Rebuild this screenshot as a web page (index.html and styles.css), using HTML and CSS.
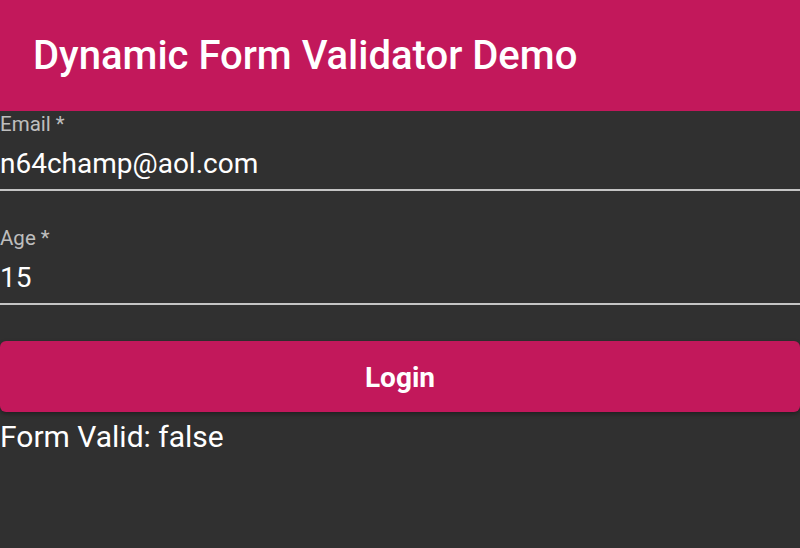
FILE: index.html
```html
<!DOCTYPE html>
<html>
<head>
<meta charset="utf-8">
<link rel="stylesheet" href="styles.css">
</head>
<body>
<header class="app-bar">
  <h1 class="title">Dynamic Form Validator Demo</h1>
</header>
<main class="content">
  <form class="form">
    <div class="field">
      <label class="label">Email *</label>
      <div class="value">n64champ@aol.com</div>
    </div>
    <div class="field">
      <label class="label">Age *</label>
      <div class="value">15</div>
    </div>
    <button type="button" class="btn">Login</button>
  </form>
  <p class="status">Form Valid: false</p>
</main>
</body>
</html>
```
FILE: styles.css
```css
html, body {
  margin: 0;
  padding: 0;
  background: #303030;
  font-family: Roboto, "Noto Sans", sans-serif;
  color: #fff;
}
.app-bar {
  background: #c2185b;
  height: 111px;
  display: flex;
  align-items: center;
  padding: 0 33px;
}
.title {
  margin: 0;
  font-size: 40px;
  font-weight: 500;
  color: #fff;
}
.form {
  display: flex;
  flex-direction: column;
}
.field {
  display: flex;
  flex-direction: column;
  border-bottom: 2px solid #c4c4c4;
  padding-top: 1px;
  padding-bottom: 8px;
  margin-bottom: 34px;
}
.label {
  font-size: 20.5px;
  color: rgba(255, 255, 255, 0.7);
  line-height: 24px;
}
.value {
  font-size: 28px;
  line-height: 34px;
  margin-top: 11px;
}
.btn {
  margin-top: 2px;
  height: 71px;
  padding-top: 3px;
  border: none;
  border-radius: 6px;
  background: #c2185b;
  color: #fff;
  font-family: Roboto, sans-serif;
  font-size: 28px;
  font-weight: 700;
  box-shadow: 0 2px 4px rgba(0, 0, 0, 0.35);
}
.status {
  margin: 7px 0 0;
  font-size: 30px;
  line-height: 36px;
}
```
